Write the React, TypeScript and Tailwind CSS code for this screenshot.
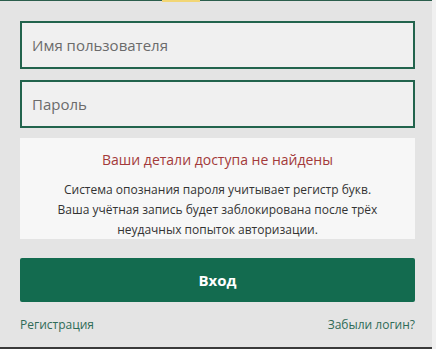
const LoginPanel = () => {
  return (
    <div className="relative flex w-[436px] h-[349px] bg-[#f0f0f0] font-['Open_Sans',sans-serif]">
      <div className="absolute left-[162px] top-0 h-[2px] w-[38px] bg-[#f2d675]" />
      <div className="flex w-[432px] flex-col border-t border-b-2 border-t-[#2b5e4c] border-b-[#3a3a3a] bg-[#e4e4e4] pl-5 pr-[17px] pt-5">
        <input
          placeholder="Имя пользователя"
          className="h-12 w-full border-2 border-[#22644d] bg-[#f0f0f0] px-[10px] text-[15px] text-[#333] placeholder:text-[#6b6b6b] outline-none"
        />
        <input
          type="password"
          placeholder="Пароль"
          className="mt-[11px] h-12 w-full border-2 border-[#22644d] bg-[#f0f0f0] px-[10px] text-[15px] text-[#333] placeholder:text-[#6b6b6b] outline-none"
        />
        <div className="mt-[10px] flex h-[101px] flex-col items-center bg-[#f7f7f7] pt-[11px] text-center">
          <p className="text-[14px] leading-[22px] text-[#a33a3a]">
            Ваши детали доступа не найдены
          </p>
          <p className="mt-[9px] text-[12px] leading-[20px] text-[#333]">
            Система опознания пароля учитывает регистр букв.
            <br />
            Ваша учётная запись будет заблокирована после трёх
            <br />
            неудачных попыток авторизации.
          </p>
        </div>
        <button className="mt-[19px] h-11 w-full rounded-[2px] bg-[#136b4f] text-[15px] font-bold text-white">
          Вход
        </button>
        <div className="mt-[14px] flex items-center justify-between text-[12px] text-[#2f6b57]">
          <a href="#">Регистрация</a>
          <a href="#">Забыли логин?</a>
        </div>
      </div>
    </div>
  );
};

export default function App() {
  return <LoginPanel />;
}
